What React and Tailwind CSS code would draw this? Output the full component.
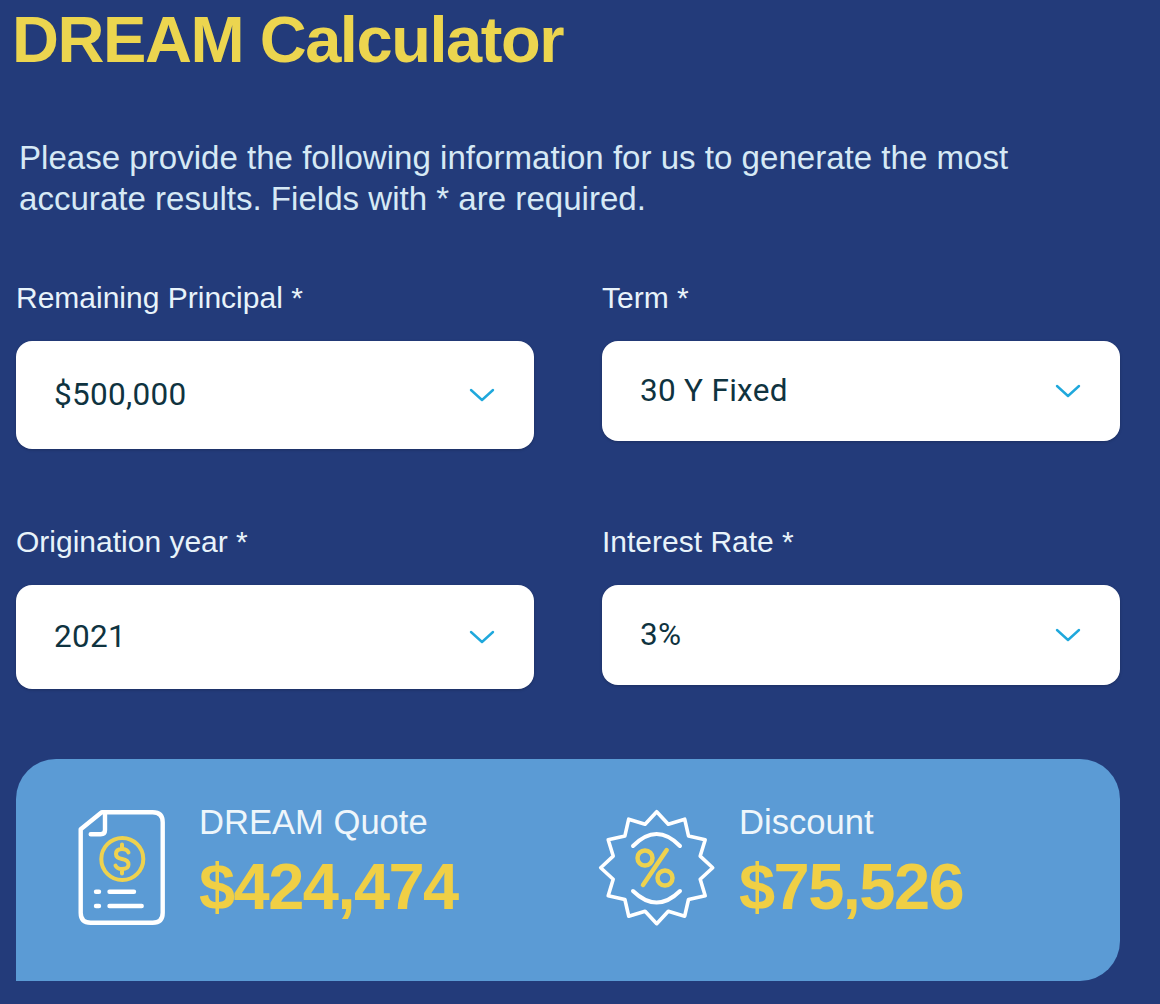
import React from "react";

const Chevron = () => (
  <svg width="26" height="16" viewBox="0 0 26 16" fill="none" className="shrink-0">
    <path d="M2 3 L13 13 L24 3" stroke="#1fa8dc" strokeWidth="2.4" strokeLinecap="round" strokeLinejoin="round" />
  </svg>
);

const Field = ({ label, value, h }) => (
  <div className="flex flex-col">
    <label className="text-[30px] leading-[36px] text-[#e8f3fa] font-['Liberation_Sans',sans-serif] mb-[25px]">{label}</label>
    <div className={`flex items-center justify-between bg-white rounded-[16px] pl-[38px] pr-[39px] shadow-[0_1px_3px_rgba(0,0,0,0.2)] ${h}`}>
      <span className="text-[31.5px] text-[#0f3340] font-['Roboto',sans-serif] tracking-[0.3px]">{value}</span>
      <Chevron />
    </div>
  </div>
);

const DocIcon = () => (
  <svg width="92" height="120" viewBox="0 0 92 120" fill="none" className="shrink-0">
    <path d="M25.7 4.3 H76.7 Q86.7 4.3 86.7 14.3 V104.7 Q86.7 114.7 76.7 114.7 H14.7 Q4.7 114.7 4.7 104.7 V21.3 Z" stroke="#fff" strokeWidth="4.4" strokeLinejoin="round" />
    <path d="M29 5 V22 Q29 26.3 24.7 26.3 H14.7" stroke="#fff" strokeWidth="4.4" strokeLinecap="round" />
    <circle cx="46.3" cy="51" r="21" stroke="#eed24f" strokeWidth="4" />
    <path d="M52.5 44.5 Q51 41 46 41 Q40 41 40 46 Q40 50 46 51 Q52.5 52 52.5 56.5 Q52.5 61 46 61 Q41 61 39.5 57.5 M46 36.5 V41 M46 61 V65.5" stroke="#eed24f" strokeWidth="4" strokeLinecap="round" />
    <path d="M20 83.7 H23 M33.5 83.7 H58 M20 98 H23 M33.5 98 H65.7" stroke="#fff" strokeWidth="4.4" strokeLinecap="round" />
  </svg>
);

const badgePoints = () => {
  const pts = [];
  const n = 12;
  for (let i = 0; i < n * 2; i++) {
    const a = (Math.PI * i) / n - Math.PI / 2;
    const r = i % 2 === 0 ? 56 : 45;
    pts.push(`${(58.7 + r * Math.cos(a)).toFixed(1)},${(58.7 + r * Math.sin(a)).toFixed(1)}`);
  }
  return pts.join(" ");
};

const BadgeIcon = () => (
  <svg width="118" height="118" viewBox="0 0 118 118" fill="none" className="shrink-0">
    <polygon points={badgePoints()} stroke="#fff" strokeWidth="3.6" strokeLinejoin="round" />
    <path d="M35 37 Q58.7 13 82 37" stroke="#fff" strokeWidth="4" strokeLinecap="round" />
    <path d="M35 82 Q58.7 105 82 82" stroke="#fff" strokeWidth="4" strokeLinecap="round" />
    <path d="M68.7 41 L45 76" stroke="#eed24f" strokeWidth="4.5" strokeLinecap="round" />
    <circle cx="47" cy="49" r="7.5" stroke="#eed24f" strokeWidth="4.5" />
    <circle cx="67" cy="69" r="7.5" stroke="#eed24f" strokeWidth="4.5" />
  </svg>
);

const Stat = ({ icon, label, value, w, gap }) => (
  <div className={`flex items-center ${w} ${gap}`}>
    {icon}
    <div className="flex flex-col mb-[12px]">
      <span className="text-[34.6px] leading-[40px] text-[#eef6fb] font-['Liberation_Sans',sans-serif]">{label}</span>
      <span className="text-[65px] leading-[72px] font-bold text-[#f0cf45] font-['Liberation_Sans',sans-serif] tracking-[-1.55px] mt-[9px]">{value}</span>
    </div>
  </div>
);

export default function App() {
  return (
    <div className="w-[1160px] h-[1004px] bg-[#233b7a] overflow-hidden pt-[2px] px-[16px]">
      <h1 className="text-[65px] leading-[76px] font-bold text-[#ecd54f] font-['Liberation_Sans',sans-serif] tracking-[-1.45px] -ml-[4px]">DREAM Calculator</h1>
      <p className="mt-[59px] ml-[3px] text-[33.1px] leading-[41px] text-[#d6e9f5] font-['Liberation_Sans',sans-serif]">
        Please provide the following information for us to generate the most<br />accurate results. Fields with * are required.
      </p>
      <div className="mt-[61px] grid grid-cols-[518px_518px] gap-x-[68px] items-start">
        <Field label="Remaining Principal *" value="$500,000" h="h-[108px]" />
        <Field label="Term *" value="30 Y Fixed" h="h-[100px]" />
      </div>
      <div className="mt-[75px] grid grid-cols-[518px_518px] gap-x-[68px] items-start">
        <Field label="Origination year *" value="2021" h="h-[104px]" />
        <Field label="Interest Rate *" value="3%" h="h-[100px]" />
      </div>
      <div className="mt-[70px] w-[1104px] h-[222px] bg-[#5b9bd5] rounded-t-[40px] rounded-br-[40px] flex items-center pl-[60px] pb-[4px]">
        <Stat icon={<DocIcon />} label="DREAM Quote" value="$424,474" w="w-[522px]" gap="gap-[31px]" />
        <Stat icon={<BadgeIcon />} label="Discount" value="$75,526" w="w-[500px]" gap="gap-[23px]" />
      </div>
    </div>
  );
}
